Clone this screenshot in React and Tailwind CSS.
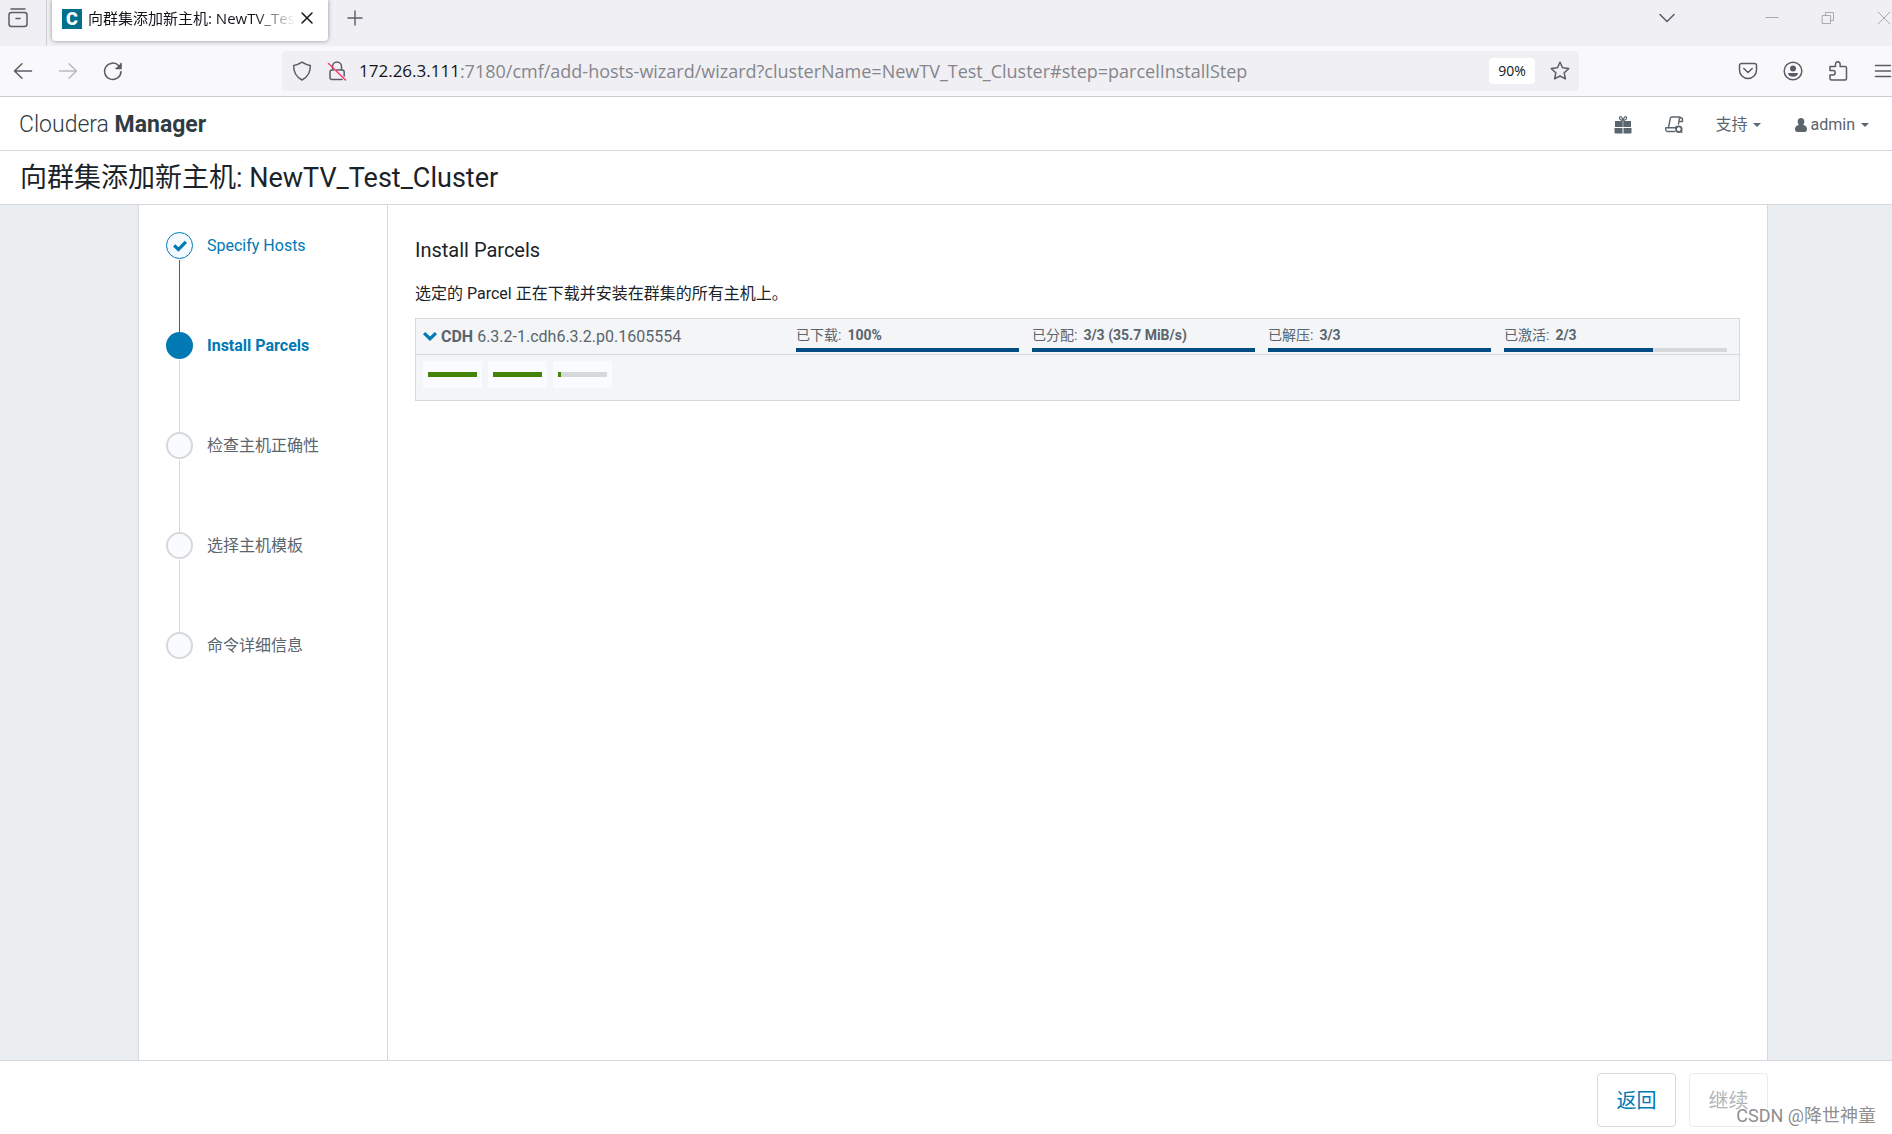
import React, { useState } from "react";

const STEPS = [
    { label: "Specify Hosts", state: "done" },
    { label: "Install Parcels", state: "current" },
    { label: "检查主机正确性", state: "todo" },
    { label: "选择主机模板", state: "todo" },
    { label: "命令详细信息", state: "todo" },
];

const METRICS = [
    { label: "已下载:", value: "100%", percent: 100 },
    { label: "已分配:", value: "3/3 (35.7 MiB/s)", percent: 100 },
    { label: "已解压:", value: "3/3", percent: 100 },
    { label: "已激活:", value: "2/3", percent: 67 },
];

const HOSTS = [
    { name: "host-1", percent: 100 },
    { name: "host-2", percent: 100 },
    { name: "host-3", percent: 6 },
];

const Svg = ({ children, className = "w-5 h-5", width = 1.5 }) => (
    <svg viewBox="0 0 20 20" className={className} fill="none" stroke="currentColor" strokeWidth={width} strokeLinecap="round" strokeLinejoin="round" aria-hidden="true">
        {children}
    </svg>
);

const RecentIcon = () => <Svg><path d="M3 1h14" /><rect x="1" y="4.5" width="18" height="14" rx="2.5" /><path d="M8 10.5h4" /></Svg>;
const CloseIcon = () => <Svg><path d="M5 5l10 10M15 5L5 15" /></Svg>;
const PlusIcon = () => <Svg width={1.4}><path d="M10 3v14M3 10h14" /></Svg>;
const BackIcon = () => <Svg><path d="M18.5 10H1.5M9 2.7L1.5 10 9 17.3" /></Svg>;
const ForwardIcon = () => <Svg><path d="M1.5 10h17M11 2.7l7.5 7.3-7.5 7.3" /></Svg>;
const ReloadIcon = () => (
    <Svg>
        <path d="M18 10.6A8.2 8.2 0 1 1 15.8 4.7" />
        <path d="M18.2 2v5.6h-5.6z" fill="currentColor" stroke="none" />
        <path d="M18 2.4v5h-5" />
    </Svg>
);
const ShieldIcon = () => <Svg><path d="M10 1.2c2.6 1.8 5.2 2.8 8.3 3.2.3 6.6-2.4 11.5-8.3 14.6C4.1 15.900 1.4 11 1.700 4.400 4.800 4 7.400 3 10 1.200z" /></Svg>;
const LockIcon = () => (
    <Svg>
        <path d="M5.500 7.500V5.500a4.500 4.500 0 0 1 9 0v3.500M15.500 9a2 2 0 0 1 1.700 2v4M15 18.500H5a2 2 0 0 1-2-2V11a2 2 0 0 1 2-2h1.500M9.500 9h5" />
        <path d="M1.500 2.500l17 16.500" stroke="#ff3b6b" />
    </Svg>
);
const StarIcon = () => <Svg><path d="M10 1.300l2.600 5.500 6.100.8-4.500 4.200 1.200 6.100L10 15l-5.400 2.900 1.200-6.100L1.300 7.600l6.100-.8z" /></Svg>;
const ChevronIcon = () => <Svg><path d="M3 6.500l7 7 7-7" /></Svg>;
const PocketIcon = () => <Svg><path d="M3.500 2.500h13a2 2 0 0 1 2 2V9a8.500 8.500 0 0 1-17 0V4.500a2 2 0 0 1 2-2z" /><path d="M5.800 7.500L10 11.500l4.200-4" /></Svg>;
const AccountIcon = () => (
    <Svg>
        <circle cx="10" cy="10" r="8.8" />
        <circle cx="10" cy="7.500" r="3" fill="currentColor" stroke="none" />
        <path d="M5 12h10c0 2-2 3.800-5 3.800S5 14 5 12z" fill="currentColor" stroke="none" />
    </Svg>
);
const PuzzleIcon = () => (
    <Svg>
        <path d="M2 5.500h5.500V3a2.300 2.300 0 0 1 4.600 0v2.500H17a1.500 1.500 0 0 1 1.500 1.500v10.500A1.500 1.500 0 0 1 17 19H3.500A1.500 1.500 0 0 1 2 17.500V14h3a2.200 2.200 0 0 0 0-4.400H2z" />
    </Svg>
);
const MenuIcon = () => <Svg><path d="M2.500 4.500h15M2.500 10h15M2.500 15.500h15" /></Svg>;
const MinimizeIcon = () => <Svg width={1}><path d="M4 9.500h12" /></Svg>;
const RestoreIcon = () => <Svg width={1}><path d="M4.500 7.500h8v8h-8zM7.500 7.500v-3h8v8h-3" /></Svg>;
const WindowCloseIcon = () => <Svg width={1}><path d="M4 4l12 12M16 4L4 16" /></Svg>;
const GiftIcon = () => (
    <Svg>
        <path d="M2 6h16v6H2zM1.500 13h8v5.500h-7a1 1 0 0 1-1-1zM10.500 13h8v4.500a1 1 0 0 1-1 1h-7z" fill="currentColor" stroke="none" />
        <path d="M10 6C8.500 5 6.300 4.500 6.300 3c0-1.300 1.200-1.700 2-1C9.300 2.800 9.700 4.500 10 6c.3-1.500.7-3.200 1.700-4 .8-.7 2-.3 2 1 0 1.500-2.200 2-3.700 3z" strokeWidth="1.200" />
        <path d="M10 6v6" stroke="#fff" strokeWidth="0.500" />
    </Svg>
);
const CommandsIcon = () => (
    <Svg width={1.400}>
        <path d="M4.500 12.500L6.300 3.300A1.800 1.800 0 0 1 8 2h8" />
        <path d="M14.500 9l.8-5.200A1.700 1.700 0 0 1 18.500 4v2.500h-3" />
        <path d="M11.500 12.800H1.800c-.5 1.500.2 3.700 2 3.700h6.700" />
        <circle cx="14.800" cy="14.200" r="2.800" strokeWidth="1.900" />
        <path d="M12 11.500l1 .8M17 16.500l.8.800" />
    </Svg>
);
const UserIcon = () => (
    <svg viewBox="0 0 12 14" className="w-3 h-3.5" fill="currentColor" aria-hidden="true">
        <path d="M6 0a3.300 3.500 0 0 1 3.300 3.500c0 1.400-.5 2.600-1.200 3.400C10.600 7.200 12 8.600 12 11.500c0 1.600-.9 2.500-2.300 2.500H2.300C.9 14 0 13.100 0 11.500c0-2.900 1.400-4.300 3.900-4.600-.7-.8-1.200-2-1.200-3.400A3.300 3.500 0 0 1 6 0z" />
    </svg>
);
const Caret = () => <svg viewBox="0 0 8 4" className="w-2 h-1" fill="currentColor" aria-hidden="true"><path d="M0 0h8L4 4z" /></svg>;
const CheckIcon = () => <svg viewBox="0 0 14 12" className="w-3.5 h-3" fill="currentColor" aria-hidden="true"><path d="M0 6.500L2.300 4.200 5.400 7.200 11.700.7 14 3 5.400 11.700z" /></svg>;
const ExpandIcon = () => <svg viewBox="0 0 14 9" className="w-3.5 h-[9px]" fill="currentColor" aria-hidden="true"><path d="M2.200 0L7 4.600 11.800 0 14 2.200 7 9 0 2.200z" /></svg>;

function IconButton({ label, children, className = "" }) {
    return <button aria-label={label} className={`shrink-0 flex items-center justify-center ${className}`}>{children}</button>;
}

function TabStrip() {
    return (
        <div className="flex h-[46px] bg-[#f0f0f4] text-[#5b5b66] overflow-hidden">
            <div className="w-[47px] shrink-0 border-r border-[#cfcfd8] flex items-start pl-2 pt-2">
                <IconButton label="Recent browsing">
                    <RecentIcon />
                </IconButton>
            </div>
            <div className="ml-[5px] w-[276px] h-[41px] shrink-0 bg-white rounded-b shadow-[0_0_4px_rgba(0,0,0,0.4)] flex items-start pt-2 pl-2.5 text-[#15141a]">
                <span className="w-5 h-5 mt-px shrink-0 bg-[#00708c] text-white font-['Roboto'] font-black text-lg leading-5 text-center">C</span>
                <span className="ml-1.5 w-[208px] leading-5 text-[15px] whitespace-nowrap overflow-hidden [mask-image:linear-gradient(to_right,black_80%,transparent)]">向群集添加新主机: NewTV_Test_Cluster</span>
                <IconButton label="Close tab" className="w-5 h-5 ml-px">
                    <CloseIcon />
                </IconButton>
            </div>
            <IconButton label="New tab" className="w-5 h-5 mt-2 ml-[17px]"><PlusIcon /></IconButton>
            <div className="ml-auto flex items-start pt-2">
                <IconButton label="List all tabs" className="w-5 mr-[85px]"><ChevronIcon /></IconButton>
                <div className="flex gap-9 -mr-0.5 text-[#a9a9b0]">
                    <IconButton label="Minimize" className="w-5"><MinimizeIcon /></IconButton>
                    <IconButton label="Restore" className="w-5"><RestoreIcon /></IconButton>
                    <IconButton label="Close window" className="w-5"><WindowCloseIcon /></IconButton>
                </div>
            </div>
        </div>
    );
}

function Toolbar() {
    const [path, setPath] = useState(":7180/cmf/add-hosts-wizard/wizard?clusterName=NewTV_Test_Cluster#step=parcelInstallStep");
    return (
        <div className="flex items-center h-[51px] bg-[#f9f9fb] border-b border-[#cccccf] text-[#5b5b66]">
            <div className="flex gap-[25px] pl-[13px] w-[282px] shrink-0">
                <IconButton label="Back" className="w-5"><BackIcon /></IconButton>
                <IconButton label="Forward" className="w-5 opacity-40"><ForwardIcon /></IconButton>
                <IconButton label="Reload" className="w-5"><ReloadIcon /></IconButton>
            </div>
            <div className="flex-1 min-w-0 h-10 rounded bg-[#f0f0f4] flex items-center pl-2.5 pr-[9px]">
                <ShieldIcon />
                <span className="ml-[15px]"><LockIcon /></span>
                <label htmlFor="address" className="ml-3 text-[17px] text-[#15141a]">172.26.3.111</label>
                <input id="address" value={path} onChange={e => setPath(e.target.value)} className="flex-1 min-w-0 bg-transparent text-lg text-[#85858c] focus:outline-none" />
                <button className="w-[46px] h-[26px] mr-[15px] rounded bg-white text-sm text-[#15141a]">90%</button>
                <IconButton label="Bookmark this page"><StarIcon /></IconButton>
            </div>
            <div className="flex gap-[25px] ml-[159px] -mr-px">
                <IconButton label="Save to Pocket"><PocketIcon /></IconButton>
                <IconButton label="Account"><AccountIcon /></IconButton>
                <IconButton label="Extensions"><PuzzleIcon /></IconButton>
                <IconButton label="Menu"><MenuIcon /></IconButton>
            </div>
        </div>
    );
}

function Header() {
    return (
        <header className="flex items-center justify-between h-[54px] pt-0.5 pl-[19px] pr-[23px] border-b border-[#d6d8db] text-[#5a656d]">
            <a href="#home" className="text-[23px] leading-7 font-light text-[#2f3c44]">Cloudera <span className="font-bold">Manager</span></a>
            <nav className="flex items-center text-base">
                <IconButton label="What's new" className="mr-[31px]"><GiftIcon /></IconButton>
                <IconButton label="Running commands" className="mr-8"><CommandsIcon /></IconButton>
                <button className="flex items-center gap-[5px] mr-[34px]">支持 <Caret /></button>
                <button className="flex items-center gap-1"><UserIcon /> admin <span className="ml-0.5"><Caret /></span></button>
            </nav>
        </header>
    );
}

const CIRCLES = {
    done: "border border-[#0079b4] bg-[#f5faff] text-[#0079b4]",
    current: "bg-[#0079b4]",
    todo: "border-2 border-[#d6d8db] bg-[#f9fbfe]",
};

const LABELS = {
    done: "text-[#0079b4]",
    current: "text-[#0079b4] font-bold",
    todo: "text-[#5a656d]",
};

function Steps() {
    return (
        <ol className="w-[249px] shrink-0 border-r border-[#d6d8db] pt-[27px] pl-[27px]">
            {STEPS.map((step, i) => (
                <li key={step.label} className="flex gap-3.5">
                    <div className="w-[27px] flex flex-col items-center">
                        <span className={`w-[27px] h-[27px] rounded-full flex items-center justify-center ${CIRCLES[step.state]}`}>
                            {step.state === "done" && <CheckIcon />}
                        </span>
                        {i < STEPS.length - 1 && <span className={`w-px h-[72px] mt-px ${step.state === "done" ? "bg-[#0079b4]" : "bg-[#d6d8db]"}`} />}
                    </div>
                    <span className={`text-base leading-[27px] ${LABELS[step.state]}`}>{step.label}</span>
                </li>
            ))}
        </ol>
    );
}

function ParcelPanel() {
    const [open, setOpen] = useState(true);
    return (
        <section className="mt-3 border border-[#d6d8db] bg-[#f3f5f7] text-[#5a656d]">
            <div className="flex h-[35px] pr-3">
                <button onClick={() => setOpen(!open)} aria-expanded={open} className="w-[380px] shrink-0 flex items-center gap-1 pl-[7px] text-base">
                    <span className="text-[#0079b4]"><ExpandIcon /></span>
                    <span><b>CDH</b> 6.3.2-1.cdh6.3.2.p0.1605554</span>
                </button>
                <div className="flex-1 grid grid-cols-4 gap-[13px]">
                    {METRICS.map(m => (
                        <div key={m.label} className="pt-1.5">
                            <div className="text-sm leading-5 flex gap-1.5"><span>{m.label}</span><b>{m.value}</b></div>
                            <div className="mt-[3px] h-1 bg-[#d6d8db]">
                                <div className="h-1 bg-[#004c83]" style={{ width: `${m.percent}%` }} />
                            </div>
                        </div>
                    ))}
                </div>
            </div>
            {open && (
                <div className="border-t border-[#d6d8db] h-[46px] flex gap-1.5 pt-1.5 pl-[7px]">
                    {HOSTS.map(h => (
                        <div key={h.name} className="w-[59px] h-[27px] px-[5px] bg-[#f9fbfe] flex items-center">
                            <div className="w-full h-[5px] bg-[#d6d8db]">
                                <div className="h-[5px] bg-[#458209]" style={{ width: `${h.percent}%` }} />
                            </div>
                        </div>
                    ))}
                </div>
            )}
        </section>
    );
}

export default function App() {
    return (
        <div className="min-h-screen flex flex-col bg-white overflow-x-hidden">
            <div className="font-['Open_Sans','Noto_Sans_CJK_SC',sans-serif]">
                <TabStrip />
                <Toolbar />
            </div>
            <div className="flex-1 flex flex-col font-['Roboto','Noto_Sans_CJK_SC',sans-serif] text-[#1b2329]">
                <Header />
                <h1 className="h-[54px] px-5 border-b border-[#d6d8db] text-[27px] leading-[55px]">向群集添加新主机: NewTV_Test_Cluster</h1>
                <div className="flex-1 flex bg-[#eaeef1] pl-[138px] pr-[124px]">
                    <div className="flex-1 flex bg-white border-x border-[#d6d8db]">
                        <Steps />
                        <main className="flex-1 pt-[30px] px-[27px]">
                            <h2 className="text-xl leading-[30px]">Install Parcels</h2>
                            <p className="mt-[17px] text-base leading-6">选定的 Parcel 正在下载并安装在群集的所有主机上。</p>
                            <ParcelPanel />
                        </main>
                    </div>
                </div>
                <footer className="relative border-t border-[#d6d8db] pt-3 pb-[7px] pr-[124px] flex justify-end gap-[13px] text-xl">
                    <button className="w-[79px] h-[54px] pt-0.5 rounded border border-[#d6d8db] text-[#0079b4]">返回</button>
                    <button disabled className="w-[79px] h-[54px] pt-0.5 rounded border border-[#ebebed] text-[#b0b6ba]">继续</button>
                    <span className="absolute right-4 bottom-1 text-lg text-[#808080]/90">CSDN @降世神童</span>
                </footer>
            </div>
        </div>
    );
}
